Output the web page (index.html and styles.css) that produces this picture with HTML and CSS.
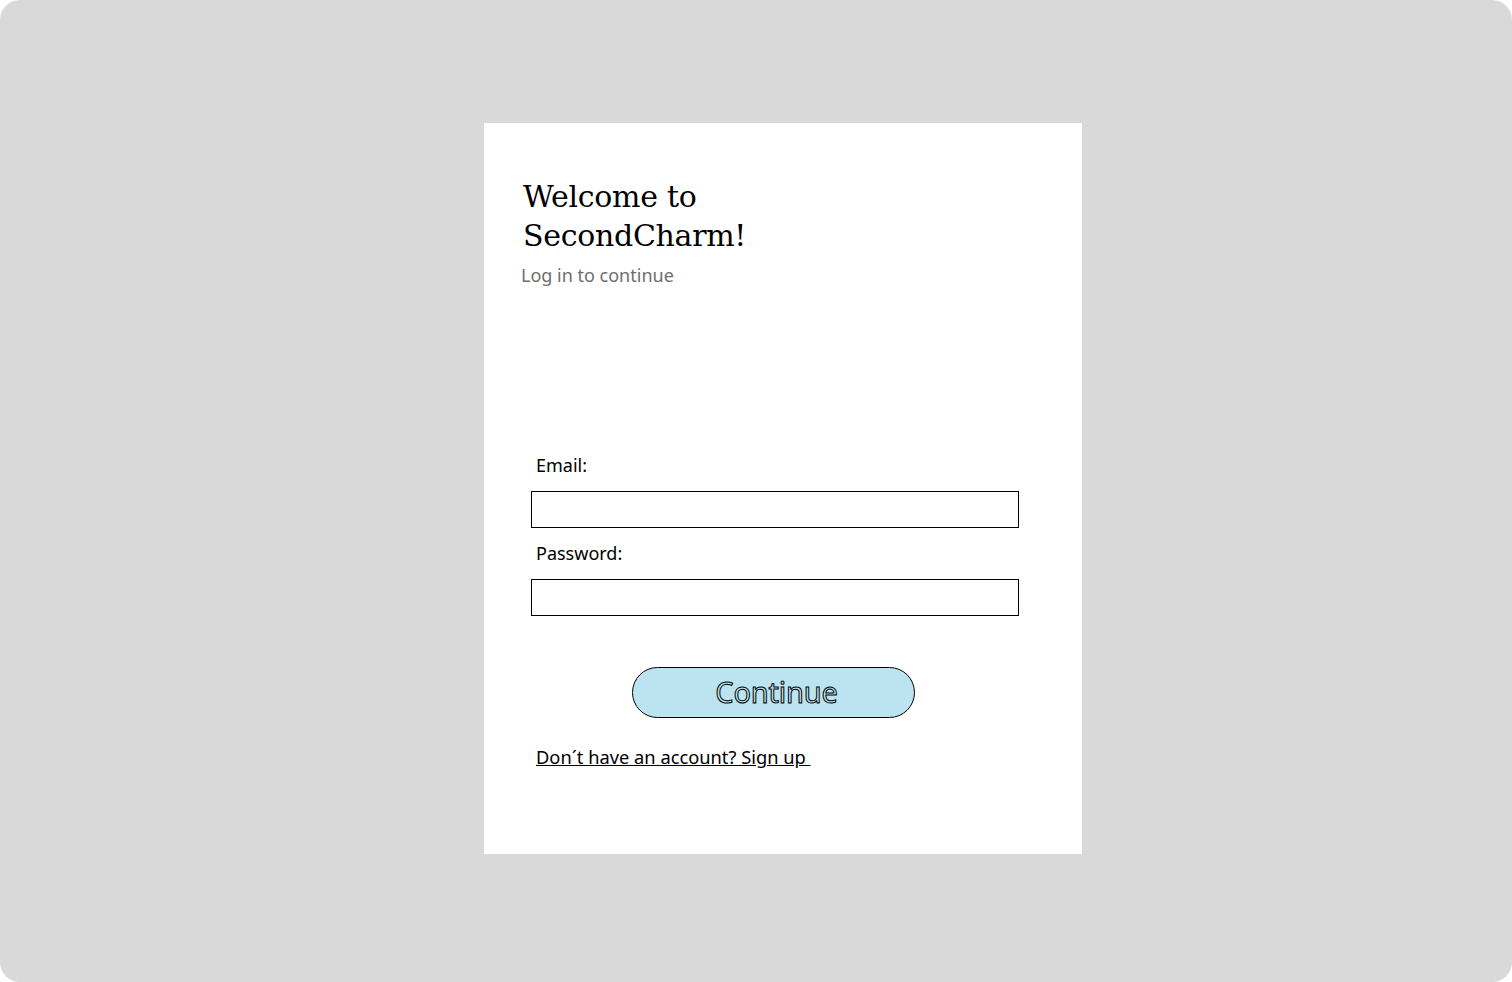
FILE: index.html
```html
<!DOCTYPE html>
<html>
<head>
<meta charset="utf-8">
<link rel="stylesheet" href="styles.css">
</head>
<body>
<div class="page">
  <div class="card">
    <h1 class="title">Welcome to<br>SecondCharm!</h1>
    <p class="subtitle">Log in to continue</p>
    <form class="form">
      <label class="label">Email:</label>
      <input class="field" type="text">
      <label class="label">Password:</label>
      <input class="field" type="password">
      <div class="btn-row"><button class="btn" type="button">Continue</button></div>
      <a class="signup" href="#">Don´t have an account? Sign up&nbsp;</a>
    </form>
  </div>
</div>
</body>
</html>
```
FILE: styles.css
```css
html, body { margin: 0; padding: 0; background: #ffffff; }
.page {
  width: 1512px;
  height: 982px;
  box-sizing: border-box;
  background: #d9d9d9;
  border-radius: 20px;
  padding: 123px 0 0 484px;
}
.card {
  width: 598px;
  height: 731px;
  box-sizing: border-box;
  background: #ffffff;
  padding: 54px 0 0 0;
  font-family: "Noto Sans", "Open Sans", sans-serif;
}
.title {
  margin: 0 0 0 39px;
  font-family: "DejaVu Serif", serif;
  font-weight: normal;
  font-size: 30px;
  line-height: 39px;
  color: #000;
  letter-spacing: -0.3px;
}
.subtitle {
  margin: 7px 0 0 37px;
  font-size: 18px;
  line-height: 26px;
  color: #6e6e6e;
}
.form {
  display: flex;
  flex-direction: column;
  margin: 165px 0 0 47px;
  width: 488px;
}
.label {
  margin-left: 5px;
  font-size: 18px;
  line-height: 24px;
  color: #000;
}
.field {
  margin: 14px 0 12px 0;
  height: 37px;
  box-sizing: border-box;
  border: 1px solid #000;
  border-radius: 0;
  padding: 0 6px;
  background: #fff;
  outline: none;
}
.field + .label { margin-top: 1px; }
.btn-row {
  display: flex;
  margin-top: 39px;
  padding-left: 101px;
}
.btn {
  width: 283px;
  height: 51px;
  border: 1px solid #000;
  border-radius: 26px;
  background: #bce4f0;
  font-family: "Noto Sans", sans-serif;
  font-size: 29px;
  color: #bce4f0;
  -webkit-text-stroke: 1px #000;
  padding: 0 0 2px 6px;
  letter-spacing: -0.2px;
}
.signup {
  margin: 27px 0 0 5px;
  font-size: 18.3px;
  line-height: 24px;
  color: #000;
  text-decoration: underline;
  align-self: flex-start;
}
```
